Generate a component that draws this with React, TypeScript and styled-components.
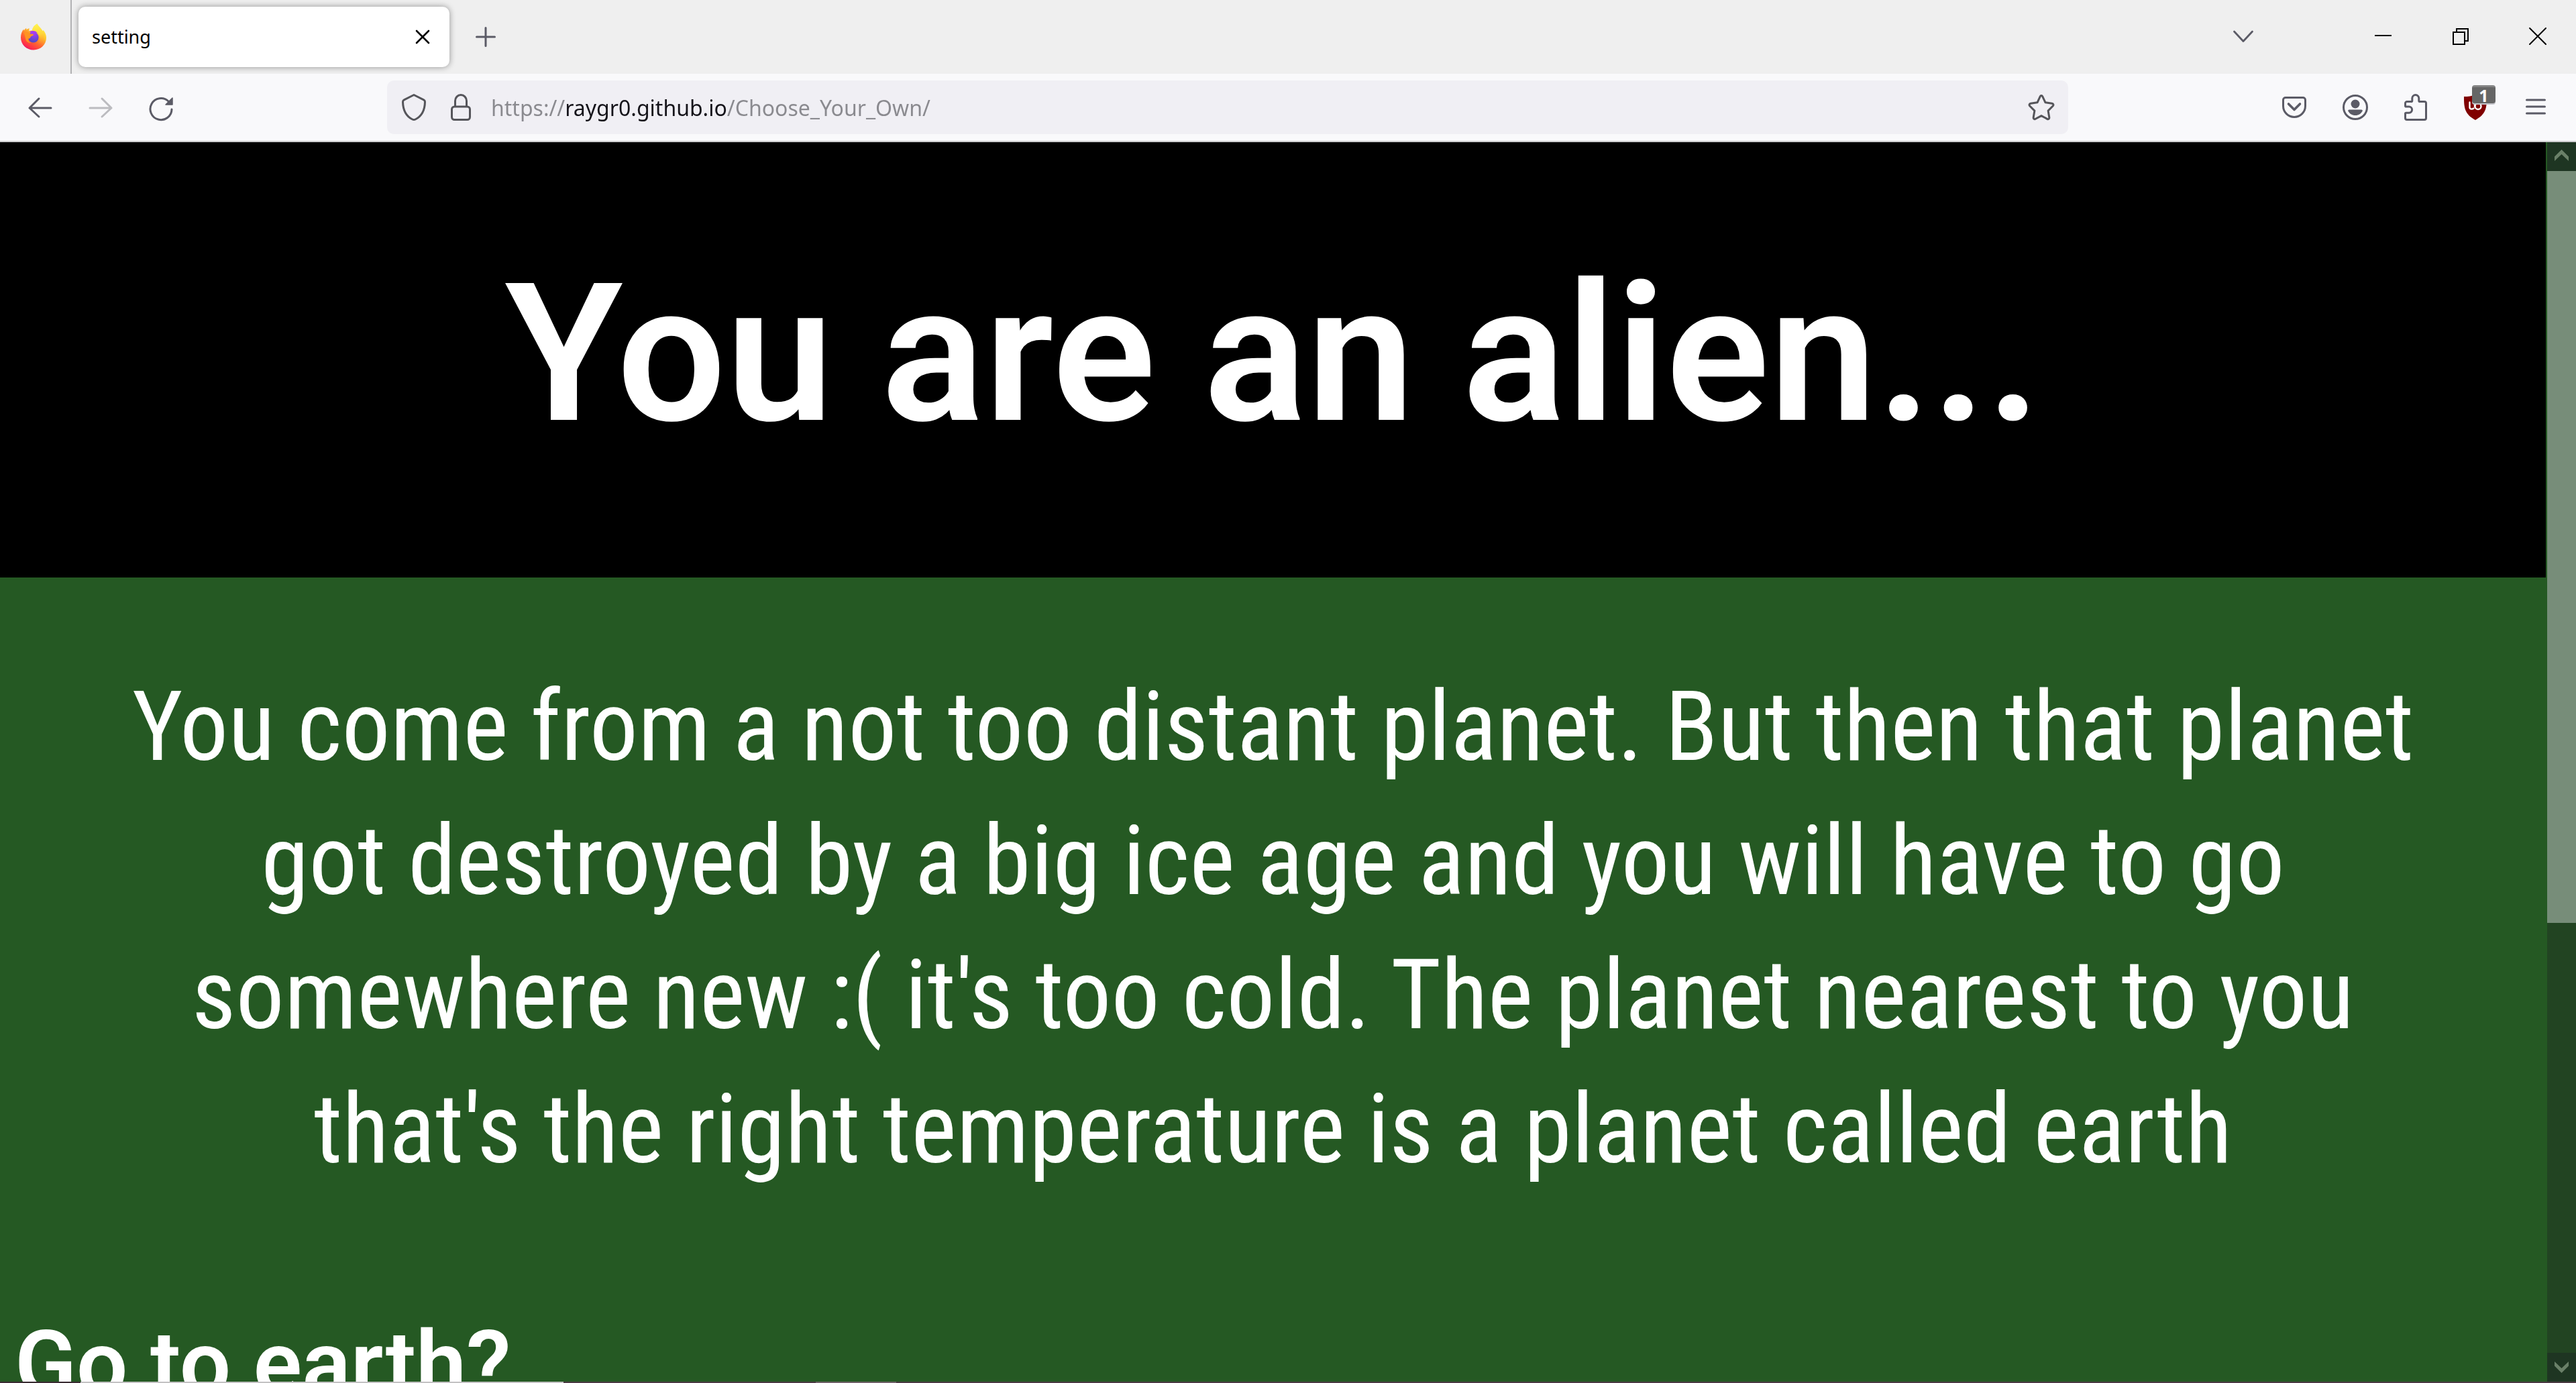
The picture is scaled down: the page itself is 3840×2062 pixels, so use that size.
import React from 'react';
import styled, { createGlobalStyle, css } from 'styled-components';

const color = {
  tabStrip: '#efefef',
  toolbar: '#f9f9fb',
  field: '#f0eff4',
  icon: '#5b5b66',
  fieldIcon: '#55555a',
  muted: '#8a8a8f',
  ink: '#15141a',
  page: '#255923',
};

const uiFont = css`
  font-family: 'Noto Sans', 'Open Sans', sans-serif;
`;

const GlobalStyle = createGlobalStyle`
  *, *::before, *::after { box-sizing: border-box; }
  body { margin: 0; overflow: hidden; }
  h1, h2, p { margin: 0; }
  button { padding: 0; border: 0; background: none; color: inherit; }
`;

const Window = styled.div`
  display: flex;
  flex-direction: column;
  height: 100vh;
  overflow: hidden;
  background: ${color.page};
`;

const Icon = styled.svg`
  display: block;
  flex: none;
  overflow: visible;
  fill: none;
  stroke: currentColor;
  stroke-linecap: round;
  stroke-linejoin: round;
`;

/* ---------- tab strip ---------- */

const TabStrip = styled.header`
  display: flex;
  flex: none;
  height: 110px;
  background: ${color.tabStrip};
  color: ${color.icon};
`;

const FirefoxView = styled.button`
  display: flex;
  align-items: center;
  width: 107px;
  padding-left: 30px;
  border-right: 2px solid #b1b1b3;
`;

const Tab = styled.div`
  display: flex;
  align-items: center;
  width: 553px;
  margin: 10px 14px 10px 10px;
  border-radius: 10px;
  background: #fff;
  box-shadow: 0 0 10px rgba(0, 0, 0, 0.4);
  color: #000;
`;

const TabTitle = styled.button`
  ${uiFont}
  flex: 1;
  height: 90px;
  padding-left: 20px;
  font-size: 27px;
  line-height: 36px;
  text-align: left;
`;

const IconButton = styled.button<{ $width: number }>`
  display: flex;
  flex: none;
  align-items: center;
  justify-content: center;
  width: ${(p) => p.$width}px;
  color: inherit;

  &:disabled {
    color: #bcbcc0;
  }
`;

const WindowControls = styled.div`
  display: flex;
  margin-left: auto;
  color: #000;
`;

const TabListButton = styled(IconButton)`
  margin-right: 111px;
  color: ${color.icon};
`;

/* ---------- toolbar ---------- */

const Toolbar = styled.nav`
  display: flex;
  flex: none;
  height: 102px;
  padding: 0 15px;
  border-bottom: 2px solid #ccccce;
  background: ${color.toolbar};
  color: ${color.icon};
`;

const AddressBar = styled.form`
  display: flex;
  flex: 1;
  align-items: center;
  min-width: 0;
  margin: 10px 292px;
  padding: 0 5px;
  border-radius: 10px;
  background: ${color.field};
  color: ${color.fieldIcon};
`;

const Address = styled.input`
  ${uiFont}
  flex: 1;
  min-width: 0;
  height: 80px;
  padding: 0;
  border: 0;
  outline: 0;
  color: ${color.muted};
  font-size: 32px;
  line-height: 44px;
  background: linear-gradient(
    to right,
    ${color.muted} 111px,
    ${color.ink} 111px 352px,
    ${color.muted} 352px
  );
  -webkit-background-clip: text;
  background-clip: text;
  -webkit-text-fill-color: transparent;
`;

const AddressIcons = styled.div`
  display: flex;
  gap: 4px;
  height: 80px;
  margin-right: 14px;
`;

const BadgeAnchor = styled.span`
  position: relative;
  display: block;
`;

const Badge = styled.span`
  position: absolute;
  top: -14px;
  left: 13px;
  width: 35px;
  height: 27px;
  border-top: 3px solid #858585;
  border-radius: 4px;
  background: #666;
  box-shadow: 0 2px 0 #c4c4ca;
  color: #fff;
  font: 700 25px/24px 'Open Sans', sans-serif;
  text-align: center;
`;

/* ---------- page ---------- */

const Viewport = styled.div`
  display: flex;
  flex: 1;
  min-height: 0;
`;

const Page = styled.main`
  flex: 1;
  min-width: 0;
  overflow: hidden;
  background: ${color.page};
  color: #fff;
`;

const Banner = styled.div`
  padding: 150px 40px 166px;
  background: #000;
`;

const Title = styled.h1`
  font: 600 287px/333px Roboto, sans-serif;
  text-align: center;
`;

const Story = styled.p`
  padding: 123px 180px 172px;
  font: 400 144px/200px 'Roboto Condensed', Roboto, sans-serif;
  text-align: center;
`;

const Question = styled.h2`
  padding-left: 22px;
  font: 600 135px/156px Roboto, sans-serif;
`;

const ScrollBar = styled.div`
  display: flex;
  flex: none;
  flex-direction: column;
  width: 45px;
  border-left: 2px solid ${color.page};
  background: #224422;
`;

const ScrollButton = styled.button`
  display: flex;
  flex: none;
  align-items: center;
  justify-content: center;
  height: 43px;
  background: #1e3522;
`;

const ScrollTrack = styled.div`
  display: flex;
  flex: 1;
  flex-direction: column;
`;

const ScrollPart = styled.div<{ $share: number; $thumb?: boolean }>`
  flex: ${(p) => p.$share};
  background: ${(p) => (p.$thumb ? '#778d79' : 'transparent')};
`;

const DesktopEdge = styled.div`
  display: flex;
  flex: none;
  height: 2px;
  background: #4b3b43;
`;

const EdgeSegment = styled.div<{ $width: number; $color: string }>`
  width: ${(p) => p.$width}px;
  background: ${(p) => p.$color};
`;

const FirefoxLogo = () => (
  <Icon width="40" height="40" viewBox="0 0 40 40" aria-hidden="true">
    <defs>
      <linearGradient id="fx-body" x1="0.8" y1="0.1" x2="0.25" y2="1">
        <stop offset="0" stopColor="#fff14a" />
        <stop offset="0.3" stopColor="#ffc42b" />
        <stop offset="0.6" stopColor="#ff6a2f" />
        <stop offset="0.85" stopColor="#ff3147" />
        <stop offset="1" stopColor="#e5116e" />
      </linearGradient>
      <linearGradient id="fx-flame" x1="0.5" y1="0" x2="0.6" y2="1">
        <stop offset="0" stopColor="#fff44f" />
        <stop offset="0.5" stopColor="#ffd53a" />
        <stop offset="1" stopColor="#ff8a2a" stopOpacity="0" />
      </linearGradient>
      <radialGradient id="fx-globe" cx="0.6" cy="0.2" r="0.85">
        <stop offset="0" stopColor="#a23cf5" />
        <stop offset="0.55" stopColor="#6d45d8" />
        <stop offset="1" stopColor="#4c4bbd" />
      </radialGradient>
    </defs>
    <g stroke="none">
      <path
        fill="url(#fx-body)"
        d="M25.500 0.500c1 3 3.800 4.800 5.800 7.400 1 1.300 1.700 2.300 2.200 3.400l1.200-1.300c2.800 3.700 4.300 7.300 4.300 11.300 0 10.500-8.500 18.200-19 18.200S1 31.500 1 21c0-5.200 1.600-9.500 4.300-12.600l.5 2.400c.8-1.600 2-3 3.400-4l.3 2.400c1.100-1 2.700-1.700 4.300-2l-.6 4c1.400-.6 3.200-.8 5-.6 0-4 3-8 7.300-10.100z"
      />
      <path
        fill="url(#fx-flame)"
        d="M25.500 0.500c1 3 3.800 4.800 5.800 7.400 4 5 5 10.400 3.200 16-1.600 5-5.500 7.600-9 7.600 4-4 5-9 3.300-13.300-1.700-4-5.300-5.600-10.600-7.600 0-4 3-8 7.300-10.100z"
      />
      <circle cx="19.800" cy="20.800" r="7.800" fill="url(#fx-globe)" />
      <path fill="#a83cf0" d="M14.500 12.500c3.500-2.500 9-1.800 11.500 2-1.500-.5-3-.3-4 .5l-5 1z" />
      <path
        fill="#ff9422"
        d="M6 14c2.500-2.500 6-2 8.400 1.200 1.700.8 3.600.2 5.300.7.600.3.300 1.200-.2 1.700-1.400 1-3.300 1.300-3.900 2.300-.3 1.800-1.700 2.700-3.100 2.700-1 2.700 1.200 5.700 4.300 6.200-4.300.7-7.800-1.800-8.600-5.800z"
      />
    </g>
  </Icon>
);

export default function App() {
  return (
    <Window>
      <GlobalStyle />
      <TabStrip>
        <FirefoxView aria-label="Firefox View">
          <FirefoxLogo />
        </FirefoxView>
        <Tab>
          <TabTitle role="tab" aria-selected="true">setting</TabTitle>
          <IconButton $width={80} aria-label="Close tab">
            <Icon width="20" height="20" viewBox="0 0 20 20" strokeWidth="2.600">
              <path d="M1 1l18 18M19 1L1 19" />
            </Icon>
          </IconButton>
        </Tab>
        <IconButton $width={80} aria-label="New tab">
          <Icon width="30" height="30" viewBox="0 0 30 30" strokeWidth="3">
            <path d="M15 1.500v27M1.500 15h27" />
          </Icon>
        </IconButton>
        <WindowControls>
          <TabListButton $width={80} aria-label="List all tabs">
            <Icon width="30" height="18" viewBox="0 0 30 18" strokeWidth="2.800">
              <path d="M1.500 1L15 15.500 28.500 1" />
            </Icon>
          </TabListButton>
          <IconButton $width={115} aria-label="Minimize">
            <Icon width="25" height="4" viewBox="0 0 25 4" strokeWidth="2">
              <path strokeLinecap="butt" d="M0 0h25" />
            </Icon>
          </IconButton>
          <IconButton $width={115} aria-label="Restore">
            <Icon width="24" height="24" viewBox="0 0 24 24" strokeWidth="2">
              <path strokeLinejoin="miter" strokeLinecap="butt" d="M1 5h17v18H1zM6 5V0h17v18h-5" />
            </Icon>
          </IconButton>
          <IconButton $width={115} aria-label="Close">
            <Icon width="26" height="26" viewBox="0 0 26 26" strokeWidth="2">
              <path d="M1 0l24 24M25 0L1 24" />
            </Icon>
          </IconButton>
        </WindowControls>
      </TabStrip>

      <Toolbar>
        <IconButton $width={90} aria-label="Back">
          <Icon width="36" height="30" viewBox="0 0 36 30" strokeWidth="3">
            <path d="M34 16H2M16 2L2 16l14 13" />
          </Icon>
        </IconButton>
        <IconButton $width={90} disabled aria-label="Forward">
          <Icon width="36" height="30" viewBox="0 0 36 30" strokeWidth="3">
            <path d="M2 16h32M20 2l14 14-14 13" />
          </Icon>
        </IconButton>
        <IconButton $width={90} aria-label="Reload">
          <Icon width="36" height="36" viewBox="0 0 36 36" strokeWidth="3">
            <path d="M34 21A16 16 0 1 1 29 9" />
            <path fill="currentColor" strokeWidth="1.500" d="M35 4v10H25z" />
          </Icon>
        </IconButton>

        <AddressBar onSubmit={(e) => e.preventDefault()}>
          <AddressIcons>
            <IconButton type="button" $width={70} aria-label="Tracking protection">
              <Icon width="36" height="40" viewBox="0 0 36 40" strokeWidth="3">
                <path d="M18 1.500L3.400 8.800c-1.200.6-1.900 1.600-1.900 2.900C1.700 25 7 33.500 15.800 38c1.600.8 2.800.8 4.400 0C29 33.500 34.300 25 34.500 11.700c0-1.300-.7-2.300-1.900-2.900z" />
              </Icon>
            </IconButton>
            <IconButton type="button" $width={62} aria-label="Site security">
              <Icon width="30" height="40" viewBox="0 0 30 40" strokeWidth="3">
                <rect x="1.500" y="19" width="27" height="19.500" rx="4" />
                <path d="M6.500 18v-7.500a8.500 9 0 0 1 17 0V18" />
              </Icon>
            </IconButton>
          </AddressIcons>
          <Address
            aria-label="Address"
            spellCheck={false}
            defaultValue="https://raygr0.github.io/Choose_Your_Own/"
          />
          <IconButton type="button" $width={70} aria-label="Bookmark this page">
            <Icon width="40" height="38" viewBox="0 0 40 38" strokeWidth="3">
              <path d="M18.200 2.800c.8-1.600 2.800-1.600 3.600 0l4.200 9 9.900 1.400c2 .3 2.700 2.300 1.300 3.800l-7.100 7.100 1.700 9.900c.3 2-1.400 3.200-3.100 2.300L20 31.600l-8.700 4.700c-1.700.9-3.400-.3-3.100-2.300l1.700-9.900L2.800 17c-1.400-1.500-.7-3.500 1.300-3.800l9.900-1.400z" />
            </Icon>
          </IconButton>
        </AddressBar>

        <IconButton $width={90} aria-label="Save to Pocket">
          <Icon width="36" height="32" viewBox="0 0 36 32" strokeWidth="3">
            <path d="M5 1.500h26a3.500 3.500 0 0 1 3.500 3.500v9a16.500 16.500 0 0 1-33 0V5A3.500 3.500 0 0 1 5 1.500z" />
            <path strokeWidth="3.600" d="M9.500 11l8.500 8.500 8.500-8.500" />
          </Icon>
        </IconButton>
        <IconButton $width={90} aria-label="Account">
          <Icon width="38" height="38" viewBox="0 0 38 38" strokeWidth="3">
            <circle cx="20" cy="19" r="17.500" />
            <circle cx="20" cy="14" r="6.500" fill="currentColor" stroke="none" />
            <path
              fill="currentColor"
              stroke="none"
              d="M11 22.500h18c1.400 0 2.200 1 1.600 2.200C28.500 28.500 25 31 20 31S11.500 28.500 9.400 24.700c-.6-1.200.2-2.200 1.600-2.200z"
            />
          </Icon>
        </IconButton>
        <IconButton $width={90} aria-label="Extensions">
          <Icon width="32" height="40" viewBox="0 0 32 40" strokeWidth="3">
            <path d="M4 11.500h6.500c.8 0 1.300-.5 1.300-1.300V6.500a5 5 0 0 1 10 0v3.700c0 .8.500 1.300 1.300 1.300H30a2.500 2.500 0 0 1 2.500 2.500v22a2.500 2.500 0 0 1-2.500 2.500H4A2.500 2.500 0 0 1 1.500 36v-6.500c0-.8.500-1.300 1.300-1.300H7a4.600 4.600 0 0 0 0-9.200H2.800c-.8 0-1.300-.5-1.300-1.300V14A2.500 2.500 0 0 1 4 11.500z" />
          </Icon>
        </IconButton>
        <IconButton $width={90} aria-label="uBlock Origin">
          <BadgeAnchor>
            <Icon width="36" height="38" viewBox="0 0 36 38">
              <path
                fill="#800000"
                stroke="none"
                d="M18 0c5 2.500 11 3 17 3 0 17-1 26-17 35C2 29 1 20 1 3c6 0 12-.500 17-3z"
              />
              <path
                stroke="#fff"
                strokeWidth="2.400"
                d="M9.500 11.500v7.500c0 3 4 3.200 6 1.500M17 11.500v6.500"
              />
              <circle cx="22" cy="17.500" r="4.500" stroke="#fff" strokeWidth="2.400" />
            </Icon>
            <Badge>1</Badge>
          </BadgeAnchor>
        </IconButton>
        <IconButton $width={90} aria-label="Open application menu">
          <Icon width="30" height="24" viewBox="0 0 30 24" strokeWidth="3">
            <path d="M1.500 1h27M1.500 11h27M1.500 21h27" />
          </Icon>
        </IconButton>
      </Toolbar>

      <Viewport>
        <Page>
          <Banner>
            <Title>You are an alien...</Title>
          </Banner>
          <Story>
            You come from a not too distant planet. But then that planet got destroyed by a big ice
            age and you will have to go somewhere new :( it's too cold. The planet nearest to you
            that's the right temperature is a planet called earth
          </Story>
          <Question>Go to earth?</Question>
        </Page>
        <ScrollBar>
          <ScrollButton aria-label="Scroll up">
            <Icon width="21" height="17" viewBox="0 0 21 17">
              <path fill="#6a8068" stroke="none" d="M10.500 -2L21 8.500V15L10.500 5 0 15v-6.500z" />
            </Icon>
          </ScrollButton>
          <ScrollTrack>
            <ScrollPart $share={7} $thumb />
            <ScrollPart $share={4} />
          </ScrollTrack>
          <ScrollButton aria-label="Scroll down">
            <Icon width="21" height="17" viewBox="0 0 21 17">
              <path fill="#6a8068" stroke="none" d="M10.500 17L21 6.500V0L10.500 10 0 0v6.500z" />
            </Icon>
          </ScrollButton>
        </ScrollBar>
      </Viewport>

      <DesktopEdge>
        <EdgeSegment $width={120} $color="#3a2c33" />
        <EdgeSegment $width={720} $color="#c3c2c3" />
        <EdgeSegment $width={376} $color="#4b3b43" />
        <EdgeSegment $width={120} $color="#70636a" />
      </DesktopEdge>
    </Window>
  );
}
